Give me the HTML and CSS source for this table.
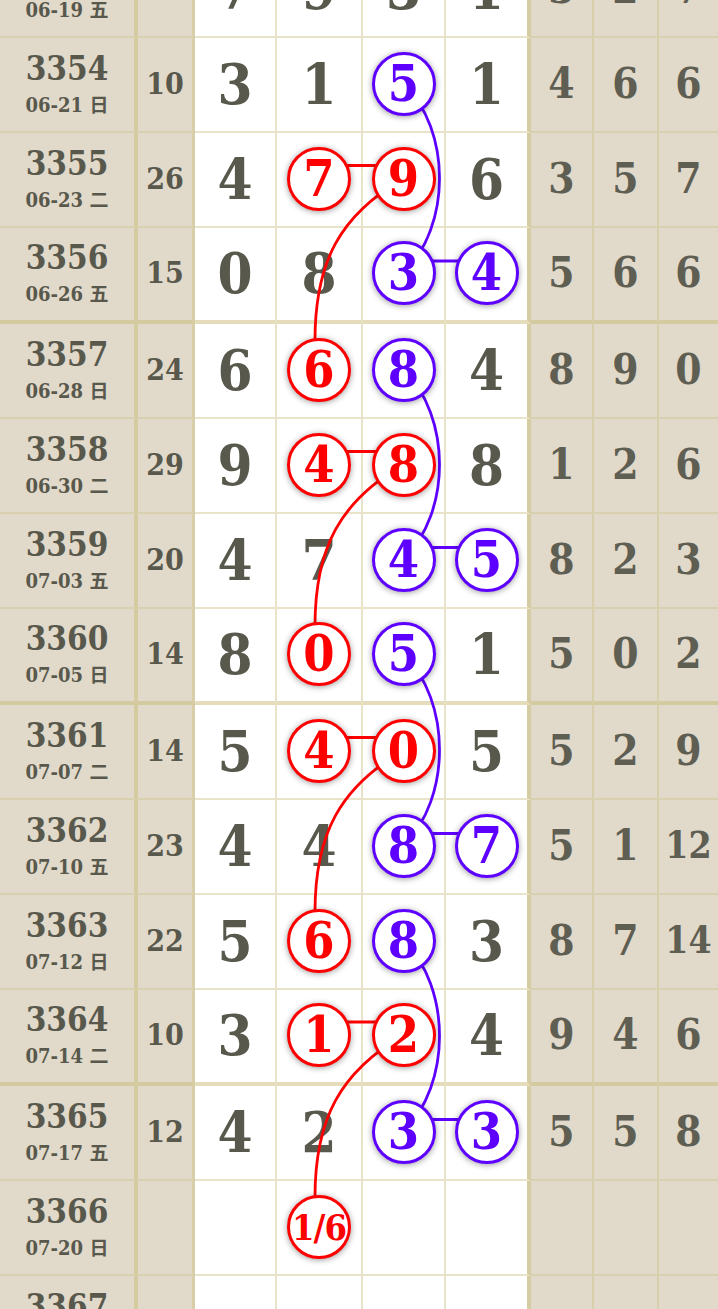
FILE: index.html
```html
<!DOCTYPE html>
<html lang="zh">
<head>
<meta charset="utf-8">
<title>走势图</title>
<link rel="stylesheet" href="styles.css">
</head>
<body>
<div class="chart">
  <div class="row">
    <div class="c c1"><div class="no">3353</div><div class="dt">06-19 <span class="wk">五</span></div></div>
    <div class="c c2">20</div>
    <div class="c c3">7</div><div class="c c4">9</div><div class="c c5">3</div><div class="c c6">1</div>
    <div class="c c7">3</div><div class="c c8">2</div><div class="c c9">7</div>
  </div>
  <div class="row">
    <div class="c c1"><div class="no">3354</div><div class="dt">06-21 <span class="wk">日</span></div></div>
    <div class="c c2">10</div>
    <div class="c c3">3</div><div class="c c4">1</div><div class="c c5"><span class="ball blue">5</span></div><div class="c c6">1</div>
    <div class="c c7">4</div><div class="c c8">6</div><div class="c c9">6</div>
  </div>
  <div class="row">
    <div class="c c1"><div class="no">3355</div><div class="dt">06-23 <span class="wk">二</span></div></div>
    <div class="c c2">26</div>
    <div class="c c3">4</div><div class="c c4"><span class="ball red">7</span></div><div class="c c5"><span class="ball red">9</span></div><div class="c c6">6</div>
    <div class="c c7">3</div><div class="c c8">5</div><div class="c c9">7</div>
  </div>
  <div class="row sep">
    <div class="c c1"><div class="no">3356</div><div class="dt">06-26 <span class="wk">五</span></div></div>
    <div class="c c2">15</div>
    <div class="c c3">0</div><div class="c c4">8</div><div class="c c5"><span class="ball blue">3</span></div><div class="c c6"><span class="ball blue">4</span></div>
    <div class="c c7">5</div><div class="c c8">6</div><div class="c c9">6</div>
  </div>
  <div class="row">
    <div class="c c1"><div class="no">3357</div><div class="dt">06-28 <span class="wk">日</span></div></div>
    <div class="c c2">24</div>
    <div class="c c3">6</div><div class="c c4"><span class="ball red">6</span></div><div class="c c5"><span class="ball blue">8</span></div><div class="c c6">4</div>
    <div class="c c7">8</div><div class="c c8">9</div><div class="c c9">0</div>
  </div>
  <div class="row">
    <div class="c c1"><div class="no">3358</div><div class="dt">06-30 <span class="wk">二</span></div></div>
    <div class="c c2">29</div>
    <div class="c c3">9</div><div class="c c4"><span class="ball red">4</span></div><div class="c c5"><span class="ball red">8</span></div><div class="c c6">8</div>
    <div class="c c7">1</div><div class="c c8">2</div><div class="c c9">6</div>
  </div>
  <div class="row">
    <div class="c c1"><div class="no">3359</div><div class="dt">07-03 <span class="wk">五</span></div></div>
    <div class="c c2">20</div>
    <div class="c c3">4</div><div class="c c4">7</div><div class="c c5"><span class="ball blue">4</span></div><div class="c c6"><span class="ball blue">5</span></div>
    <div class="c c7">8</div><div class="c c8">2</div><div class="c c9">3</div>
  </div>
  <div class="row sep">
    <div class="c c1"><div class="no">3360</div><div class="dt">07-05 <span class="wk">日</span></div></div>
    <div class="c c2">14</div>
    <div class="c c3">8</div><div class="c c4"><span class="ball red">0</span></div><div class="c c5"><span class="ball blue">5</span></div><div class="c c6">1</div>
    <div class="c c7">5</div><div class="c c8">0</div><div class="c c9">2</div>
  </div>
  <div class="row">
    <div class="c c1"><div class="no">3361</div><div class="dt">07-07 <span class="wk">二</span></div></div>
    <div class="c c2">14</div>
    <div class="c c3">5</div><div class="c c4"><span class="ball red">4</span></div><div class="c c5"><span class="ball red">0</span></div><div class="c c6">5</div>
    <div class="c c7">5</div><div class="c c8">2</div><div class="c c9">9</div>
  </div>
  <div class="row">
    <div class="c c1"><div class="no">3362</div><div class="dt">07-10 <span class="wk">五</span></div></div>
    <div class="c c2">23</div>
    <div class="c c3">4</div><div class="c c4">4</div><div class="c c5"><span class="ball blue">8</span></div><div class="c c6"><span class="ball blue">7</span></div>
    <div class="c c7">5</div><div class="c c8">1</div><div class="c c9 two">12</div>
  </div>
  <div class="row">
    <div class="c c1"><div class="no">3363</div><div class="dt">07-12 <span class="wk">日</span></div></div>
    <div class="c c2">22</div>
    <div class="c c3">5</div><div class="c c4"><span class="ball red">6</span></div><div class="c c5"><span class="ball blue">8</span></div><div class="c c6">3</div>
    <div class="c c7">8</div><div class="c c8">7</div><div class="c c9 two">14</div>
  </div>
  <div class="row sep">
    <div class="c c1"><div class="no">3364</div><div class="dt">07-14 <span class="wk">二</span></div></div>
    <div class="c c2">10</div>
    <div class="c c3">3</div><div class="c c4"><span class="ball red">1</span></div><div class="c c5"><span class="ball red">2</span></div><div class="c c6">4</div>
    <div class="c c7">9</div><div class="c c8">4</div><div class="c c9">6</div>
  </div>
  <div class="row">
    <div class="c c1"><div class="no">3365</div><div class="dt">07-17 <span class="wk">五</span></div></div>
    <div class="c c2">12</div>
    <div class="c c3">4</div><div class="c c4">2</div><div class="c c5"><span class="ball blue">3</span></div><div class="c c6"><span class="ball blue">3</span></div>
    <div class="c c7">5</div><div class="c c8">5</div><div class="c c9">8</div>
  </div>
  <div class="row">
    <div class="c c1"><div class="no">3366</div><div class="dt">07-20 <span class="wk">日</span></div></div>
    <div class="c c2"></div>
    <div class="c c3"></div><div class="c c4"><span class="ball red small">1/6</span></div><div class="c c5"></div><div class="c c6"></div>
    <div class="c c7"></div><div class="c c8"></div><div class="c c9"></div>
  </div>
  <div class="row">
    <div class="c c1"><div class="no">3367</div><div class="dt">07-22 <span class="wk">二</span></div></div>
    <div class="c c2"></div>
    <div class="c c3"></div><div class="c c4"></div><div class="c c5"></div><div class="c c6"></div>
    <div class="c c7"></div><div class="c c8"></div><div class="c c9"></div>
  </div>

  <svg class="links" width="718" height="1430" viewBox="0 -57 718 1430" xmlns="http://www.w3.org/2000/svg">
    <g class="red-links" fill="none" stroke="#ff0000" stroke-width="2.8">
      <path d="M319 165.5 H403.5"/>
      <path d="M403.5 178.5 C340 215 315 262 315 340"/>
      <path d="M319 451.5 H403.5"/>
      <path d="M403.5 464.5 C340 501 315 548 315 626"/>
      <path d="M319 737.5 H403.5"/>
      <path d="M403.5 750.5 C340 787 315 834 315 912"/>
      <path d="M319 1022 H403.5"/>
      <path d="M403.5 1035 C340 1072 315 1119 315 1197"/>
    </g>
    <g class="blue-links" fill="none" stroke="#5e00ff" stroke-width="2.8">
      <path d="M403.5 83.5 C451.5 130.5 451.5 226 403.5 273"/>
      <path d="M403.5 261 H486.5"/>
      <path d="M403.5 369.5 C451.5 416.5 451.5 512.5 403.5 559.5"/>
      <path d="M403.5 547.5 H486.5"/>
      <path d="M403.5 654 C451.5 701 451.5 798.5 403.5 845.5"/>
      <path d="M403.5 833.5 H486.5"/>
      <path d="M403.5 940.5 C451.5 987.5 451.5 1084.5 403.5 1131.5"/>
      <path d="M403.5 1119.5 H486.5"/>
    </g>
  </svg>
</div>
</body>
</html>
```
FILE: styles.css
```css
html, body {
  margin: 0;
  padding: 0;
  background: #ffffff;
  overflow: hidden;
}

body {
  font-family: "DejaVu Serif Condensed", "DejaVu Serif", serif;
  font-stretch: condensed;
  font-weight: bold;
  color: #58584c;
}

.chart {
  position: relative;
  width: 718px;
  margin-top: -57px;
}

.row {
  display: flex;
  height: 95px;
}

.row.sep {
  height: 96px;
}

.c {
  box-sizing: border-box;
  display: flex;
  align-items: center;
  justify-content: center;
  padding-bottom: 2px;
  border-right: 2px solid #e9e3ca;
  border-bottom: 2px solid #e9e3ca;
  background: #ffffff;
  font-size: 56px;
  line-height: 1;
}

.row.sep .c {
  border-bottom-width: 4px;
  border-bottom-color: #e4dcba;
}

.c1, .c2, .c7, .c8, .c9 {
  background: #e1d9c9;
  border-right-color: #d7ceab;
  border-bottom-color: #d9d0b0;
}

.row.sep .c1, .row.sep .c2, .row.sep .c7, .row.sep .c8, .row.sep .c9 {
  border-bottom-color: #d4caa0;
}

.c1 {
  width: 138px;
  flex-direction: column;
  border-right-width: 4px;
  border-right-color: #d5cba1;
}

.c2 {
  width: 57px;
  font-size: 30px;
  border-right-width: 3px;
  border-right-color: #d8cfa8;
}

.c3 { width: 82px; }
.c4 { width: 86px; }
.c5 { width: 83px; }

.c6 {
  width: 85px;
  border-right-width: 4px;
  border-right-color: #d6cca4;
}

.c7 { width: 63px; }
.c8 { width: 65px; }
.c9 { width: 59px; border-right: 0; }

.c7, .c8, .c9 {
  font-size: 42px;
  color: #5e5e53;
}

.c9.two {
  font-size: 37px;
}

.no {
  font-size: 33px;
  line-height: 36px;
}

.dt {
  margin-top: 5px;
  font-size: 20px;
  line-height: 24px;
  white-space: nowrap;
}

.wk {
  font-family: "Noto Sans CJK SC", sans-serif;
  font-weight: bold;
  font-size: 19px;
}

.ball {
  position: relative;
  z-index: 2;
  box-sizing: border-box;
  width: 64px;
  height: 64px;
  border-radius: 50%;
  border: 3px solid;
  background: #ffffff;
  display: flex;
  align-items: center;
  justify-content: center;
  font-size: 50px;
  box-shadow: 0 1px 6px rgba(0, 0, 0, 0.4);
}

.ball.red {
  color: #ff0000;
  border-color: #ff0000;
}

.ball.blue {
  color: #5e00ff;
  border-color: #5e00ff;
}

.ball.small {
  font-size: 36px;
  letter-spacing: -1px;
}

.links {
  position: absolute;
  top: 0;
  left: 0;
  z-index: 1;
  pointer-events: none;
}
```
